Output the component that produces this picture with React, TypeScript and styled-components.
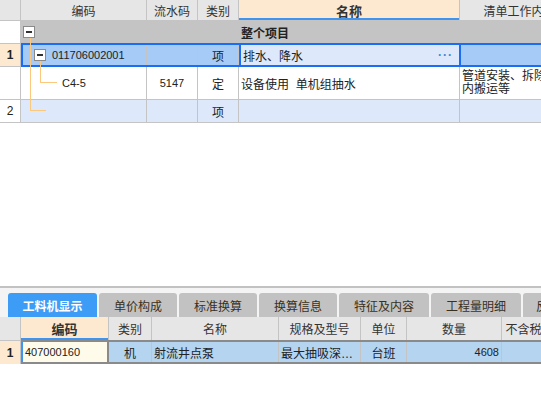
import React from "react";
import styled, { createGlobalStyle } from "styled-components";

const GlobalStyle = createGlobalStyle`
  html, body { margin: 0; padding: 0; background: #fff; }
  body {
    width: 541px;
    height: 407px;
    overflow: hidden;
    font-family: "Liberation Sans", "Noto Sans CJK SC", sans-serif;
    font-size: 12px;
    color: #222;
  }
`;

const topCols = [21, 126, 51, 41, 221, 120];
const bottomCols = [21, 88, 43, 127, 82, 46, 95, 80];

const Page = styled.div`
  display: flex;
  flex-direction: column;
  width: 541px;
  height: 407px;
  overflow: hidden;
`;

const TopGrid = styled.div`
  display: flex;
  flex-direction: column;
  height: 286px;
  flex: none;
`;

const Row = styled.div<{ $h: number; $bg?: string }>`
  display: flex;
  height: ${(p) => p.$h}px;
  flex: none;
  background: ${(p) => p.$bg || "#fff"};
  border-bottom: 1px solid #c4c4c4;
  white-space: nowrap;
`;

const Cell = styled.div<{
  $w: number;
  $align?: string;
  $bg?: string;
  $bold?: boolean;
  $pad?: number;
}>`
  position: relative;
  width: ${(p) => p.$w}px;
  flex: none;
  box-sizing: border-box;
  border-right: 1px solid #c4c4c4;
  display: flex;
  align-items: center;
  justify-content: ${(p) => p.$align || "flex-start"};
  padding: 0 ${(p) => p.$pad ?? 2}px;
  background: ${(p) => p.$bg || "transparent"};
  font-weight: ${(p) => (p.$bold ? 700 : 400)};
  overflow: hidden;
`;

const HeadCell = styled(Cell)<{ $active?: boolean }>`
  background: ${(p) => (p.$active ? "#fde9cf" : "#e6e6e6")};
  font-weight: ${(p) => (p.$active ? 700 : 400)};
  font-size: ${(p) => (p.$active ? 13 : 12)}px;
  color: #333;
  ${(p) => (p.$active ? "box-shadow: inset 0 -2px 0 #3f94f0;" : "")}
`;

const Num = styled.span<{ $ml?: number }>`
  font-size: 11px;
  margin-left: ${(p) => p.$ml ?? 0}px;
`;

const SelBox = styled.div`
  display: flex;
  flex: 1;
  border: 2px solid #1a6ef5;
  margin: -1px 0 -1px;
  background: #a6cbf6;
`;

const EditCell = styled(Cell)`
  background: #dde9fb;
  border: 2px solid #1a6ef5;
  border-top: none;
  border-bottom: none;
  justify-content: space-between;
`;

const Dots = styled.span`
  color: #3c86d8;
  font-weight: 700;
  letter-spacing: 1px;
  margin-right: 4px;
`;

const Minus = styled.span<{ $left: number }>`
  position: absolute;
  left: ${(p) => p.$left}px;
  top: 50%;
  margin-top: -6px;
  width: 12px;
  height: 12px;
  box-sizing: border-box;
  border: 1px solid #8a8a8a;
  background: #fff;
  z-index: 2;
  &::after {
    content: "";
    position: absolute;
    left: 2px;
    right: 2px;
    top: 4px;
    height: 2px;
    background: #333;
  }
`;

const TreeLine = styled.span<{ $left: number; $top: number; $w: number; $h: number }>`
  position: absolute;
  left: ${(p) => p.$left}px;
  top: ${(p) => p.$top}px;
  width: ${(p) => p.$w}px;
  height: ${(p) => p.$h}px;
  border-left: 1px solid #fcc97c;
  border-bottom: 1px solid #fcc97c;
  box-sizing: border-box;
  pointer-events: none;
`;

const Wrap = styled.div`
  white-space: normal;
  line-height: 13px;
  font-size: 12px;
`;

const TreeLayer = styled.div`
  position: relative;
  height: 0;
  z-index: 1;
`;

const Bottom = styled.div`
  display: flex;
  flex-direction: column;
  border-top: 2px solid #c2c2c2;
  flex: 1;
`;

const TabBar = styled.div`
  display: flex;
  gap: 2px;
  height: 24px;
  padding: 5px 0 0 8px;
  background: #f4f4f4;
  flex: none;
`;

const Tab = styled.div<{ $w: number; $active?: boolean }>`
  width: ${(p) => p.$w}px;
  flex: none;
  display: flex;
  align-items: center;
  justify-content: center;
  border-radius: 3px 3px 0 0;
  background: ${(p) => (p.$active ? "#3d9cf5" : "#c2c2c2")};
  color: ${(p) => (p.$active ? "#fff" : "#3a3020")};
  font-weight: ${(p) => (p.$active ? 700 : 400)};
  font-size: 12px;
  white-space: nowrap;
  overflow: hidden;
`;

const LowerRowBox = styled.div`
  display: flex;
  flex: 1;
  background: #b4d4f0;
  border-top: 2px solid #8a8a8a;
  border-bottom: 2px solid #8a8a8a;
  margin-top: -1px;
`;

const CodeCell = styled(Cell)`
  background: #fffbea;
  border-left: 2px solid #3f94f0;
  border-right: 2px solid #8a8a8a;
`;

export default function App() {
  const c = topCols;
  const b = bottomCols;
  return (
    <Page>
      <GlobalStyle />
      <TopGrid>
        <Row $h={20} $bg="#e6e6e6">
          <HeadCell $w={c[0]} />
          <HeadCell $w={c[1]} $align="center">编码</HeadCell>
          <HeadCell $w={c[2]} $align="center">流水码</HeadCell>
          <HeadCell $w={c[3]} $align="center">类别</HeadCell>
          <HeadCell $w={c[4]} $align="center" $active>名称</HeadCell>
          <HeadCell $w={c[5]} $align="center">清单工作内容</HeadCell>
        </Row>
        <TreeLayer>
          <TreeLine $left={30} $top={16} $w={16} $h={74} />
          <TreeLine $left={40} $top={38} $w={17} $h={24} />
        </TreeLayer>
        <Row $h={22} $bg="#c4c4c4">
          <Cell $w={c[0]} $bg="#fff" />
          <Cell $w={c[1]}>
            <Minus $left={2} />
          </Cell>
          <Cell $w={c[2]} />
          <Cell $w={c[3]} />
          <Cell $w={c[4]} $bold>整个项目</Cell>
          <Cell $w={c[5]} />
        </Row>
        <Row $h={22} $bg="#a6cbf6">
          <Cell $w={c[0]} $bg="#fde9cf" $bold $align="center">1</Cell>
          <SelBox>
            <Cell $w={c[1] - 2} $pad={0}>
              <Minus $left={11} />
              <Num $ml={29}>011706002001</Num>
            </Cell>
            <Cell $w={c[2]} />
            <Cell $w={c[3]} $align="center">项</Cell>
            <EditCell $w={c[4] + 1}>
              <span>排水、降水</span>
              <Dots>···</Dots>
            </EditCell>
            <Cell $w={c[5]} />
          </SelBox>
        </Row>
        <Row $h={32}>
          <Cell $w={c[0]} />
          <Cell $w={c[1]} $pad={0}>
            <Num $ml={41}>C4-5</Num>
          </Cell>
          <Cell $w={c[2]} $align="center"><Num>5147</Num></Cell>
          <Cell $w={c[3]} $align="center">定</Cell>
          <Cell $w={c[4]}>设备使用&nbsp; 单机组抽水</Cell>
          <Cell $w={c[5]}>
            <Wrap>管道安装、拆除<br />内搬运等</Wrap>
          </Cell>
        </Row>
        <Row $h={22} $bg="#dde9fb">
          <Cell $w={c[0]} $bg="#fff" $align="center">2</Cell>
          <Cell $w={c[1]} />
          <Cell $w={c[2]} />
          <Cell $w={c[3]} $align="center">项</Cell>
          <Cell $w={c[4]} />
          <Cell $w={c[5]} />
        </Row>
      </TopGrid>
      <Bottom>
        <TabBar>
          <Tab $w={89} $active>工料机显示</Tab>
          <Tab $w={78}>单价构成</Tab>
          <Tab $w={78}>标准换算</Tab>
          <Tab $w={78}>换算信息</Tab>
          <Tab $w={90}>特征及内容</Tab>
          <Tab $w={90}>工程量明细</Tab>
          <Tab $w={110}>反查图形工程量</Tab>
        </TabBar>
        <Row $h={23} $bg="#e6e6e6">
          <HeadCell $w={b[0]} />
          <HeadCell $w={b[1]} $align="center" $active>编码</HeadCell>
          <HeadCell $w={b[2]} $align="center">类别</HeadCell>
          <HeadCell $w={b[3]} $align="center">名称</HeadCell>
          <HeadCell $w={b[4]} $align="center">规格及型号</HeadCell>
          <HeadCell $w={b[5]} $align="center">单位</HeadCell>
          <HeadCell $w={b[6]} $align="center">数量</HeadCell>
          <HeadCell $w={b[7]} $align="center">不含税市场价</HeadCell>
        </Row>
        <Row $h={23} style={{ borderBottom: "none" }}>
          <Cell $w={b[0]} $bg="#fde9cf" $bold $align="center">1</Cell>
          <LowerRowBox>
            <CodeCell $w={b[1]}><Num>407000160</Num></CodeCell>
            <Cell $w={b[2]} $align="center">机</Cell>
            <Cell $w={b[3]}>射流井点泵</Cell>
            <Cell $w={b[4]}>最大抽吸深…</Cell>
            <Cell $w={b[5]} $align="center">台班</Cell>
            <Cell $w={b[6]} $align="flex-end"><Num>4608</Num></Cell>
            <Cell $w={b[7]} />
          </LowerRowBox>
        </Row>
      </Bottom>
    </Page>
  );
}
